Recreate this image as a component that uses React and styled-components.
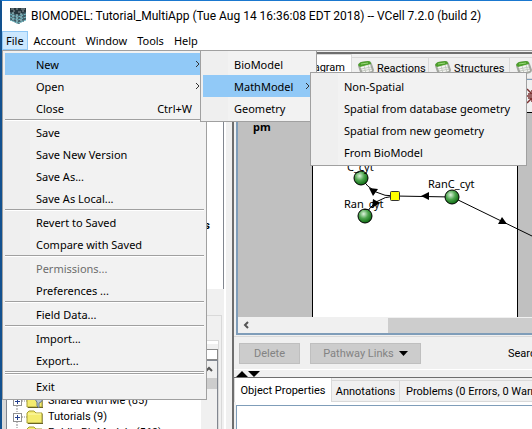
import React from "react";
import styled, { createGlobalStyle } from "styled-components";

const GlobalStyle = createGlobalStyle`
  * { box-sizing: border-box; }
  html, body { margin: 0; overflow: hidden; }
  body, button, input {
    font-family: "Noto Sans", "Open Sans", sans-serif;
    font-size: 11px;
    color: #000;
  }
  svg { flex: none; }
`;

const panel = "#f0f0f0";
const line = "#d9d9d9";
const uiFont = `"Roboto", "Noto Sans", sans-serif`;

const Window = styled.div`
  height: 100vh;
  display: flex;
  flex-direction: column;
  overflow: hidden;
  background: #fff;
  border-top: 1px solid #1a78cf;
  border-left: 2px solid #12518f;
`;

const TitleBar = styled.header`
  flex: none;
  display: flex;
  align-items: center;
  gap: 5px;
  height: 30px;
  padding-left: 8px;
  font-family: ${uiFont};
  font-size: 12px;
  white-space: nowrap;
`;

const MenuBar = styled.nav`
  flex: none;
  display: flex;
  gap: 2px;
  height: 19px;
  background: #fff;
`;

const MenuSlot = styled.div`
  position: relative;
`;

const MenuTitle = styled.button`
  display: block;
  height: 19px;
  padding: 0 3px;
  line-height: 17px;
  border: 1px solid ${(p) => (p.$open ? "#90c8f6" : "transparent")};
  background: ${(p) => (p.$open ? "#cce8ff" : "transparent")};
`;

const Popup = styled.div`
  position: absolute;
  z-index: 2;
  left: ${(p) => p.$left};
  top: ${(p) => p.$top};
  width: ${(p) => p.$width};
  padding: 2px;
  background: linear-gradient(90deg, #efefef 27px, #f2f2f2 27px);
  border: 1px solid #a0a0a0;
`;

const ItemSlot = styled.div`
  position: relative;
`;

const Item = styled.button`
  display: flex;
  justify-content: space-between;
  align-items: center;
  width: 100%;
  height: 22px;
  padding: 0 ${(p) => (p.$sub ? "3px" : "12px")} 0 31px;
  border: 0;
  white-space: nowrap;
  background: ${(p) => (p.$active ? "#91c9f7" : "transparent")};
  &:disabled { color: #6d6d6d; }
`;

const Separator = styled.hr`
  height: 2px;
  margin: 0;
  border: 0;
  border-top: 1px solid #a0a0a0;
  background: #fff;
`;

const Body = styled.main`
  flex: 1;
  min-height: 0;
  display: flex;
  background: ${panel};
  border-top: 1px solid #a0a0a0;
`;

const LeftPane = styled.section`
  flex: none;
  width: 224px;
  display: flex;
  flex-direction: column;
  border-right: 2px solid #fff;
`;

const NavTree = styled.div`
  flex: none;
  height: 238px;
  padding: 168px 13px 0 0;
  text-align: right;
  font: bold 11px ${uiFont};
  background: #fff;
  border-right: 1px solid #828790;
`;

const Database = styled.div`
  flex: 1;
  min-height: 0;
  display: flex;
  margin: 26px 2px 0 0;
  padding: 24px 2px 0 0;
  border: 1px solid ${line};
  border-width: 1px 1px 0 2px;
`;

const DatabaseTab = styled.div`
  flex: 1;
  min-width: 0;
  display: flex;
  flex-direction: column;
  border: 1px solid ${line};
  border-width: 1px 1px 0 2px;
  box-shadow: inset 0 3px #fff;
`;

const SearchField = styled.input`
  flex: none;
  width: 100%;
  height: 11px;
  margin-top: 8px;
  border: 1px solid #8a8a8a;
  background: #fff;
`;

const TreeBox = styled.div`
  flex: 1;
  min-height: 0;
  display: flex;
  border: 1px solid #828790;
  border-bottom: 0;
`;

const TreeList = styled.ul`
  flex: 1;
  min-width: 0;
  margin: 0;
  padding: 32px 0 0 6px;
  list-style: none;
  overflow: hidden;
  background: #fff;
`;

const TreeRow = styled.li`
  display: flex;
  align-items: center;
  gap: 5px;
  height: 16px;
  line-height: 16px;
  font-family: ${uiFont};
  white-space: nowrap;
`;

const VerticalBar = styled.div`
  width: 16px;
  display: flex;
  flex-direction: column;
  align-items: center;
  padding-top: 5px;
  background: ${panel};
`;

const VerticalThumb = styled.div`
  width: 16px;
  height: 11px;
  margin-top: 6px;
  background: #cdcdcd;
`;

const Divider = styled.div`
  flex: none;
  width: 6px;
`;

const RightPane = styled.section`
  flex: 1;
  min-width: 0;
  display: flex;
  flex-direction: column;
  border-left: 2px solid #6e6e6e;
`;

const TabStrip = styled.div`
  flex: none;
  display: flex;
  align-items: flex-end;
  height: ${(p) => p.$height};
  border-top: ${(p) => p.$rule} solid #6e6e6e;
  margin-top: ${(p) => p.$gap};
  overflow: hidden;
`;

const Tab = styled.button`
  flex: none;
  display: flex;
  align-items: center;
  justify-content: ${(p) => p.$align || "flex-start"};
  gap: 3px;
  width: ${(p) => p.$width};
  height: ${(p) => (p.$active ? "25px" : "22px")};
  padding: 0 ${(p) => (p.$align ? "6px" : "0")} 0 6px;
  border: 1px solid ${line};
  border-left-width: ${(p) => (p.$active ? "1px" : "0")};
  border-bottom-width: ${(p) => (p.$active ? "0" : "1px")};
  background: ${(p) => (p.$active ? "#fff" : panel)};
  font-family: ${uiFont};
  white-space: nowrap;
`;

const Editor = styled.div`
  flex: 1;
  min-height: 0;
  display: flex;
  flex-direction: column;
  margin-left: 2px;
  border: 2px solid #7f9db9;
  border-width: 1px 0 2px 2px;
`;

const ToolRow = styled.div`
  flex: none;
  display: flex;
  align-items: center;
  height: 33px;
  padding-left: 289px;
  border-bottom: 1px solid #000;
  overflow: hidden;
`;

const Canvas = styled.div`
  flex: 1;
  min-height: 0;
  overflow: hidden;
  background: #c0c0c0;
`;

const HorizontalBar = styled.div`
  flex: none;
  display: flex;
  align-items: center;
  height: 16px;
  padding-left: 5px;
  background: ${panel};
`;

const HorizontalThumb = styled.div`
  flex: 1;
  height: 15px;
  margin-left: 138px;
  background: #cdcdcd;
`;

const ActionRow = styled.div`
  flex: none;
  display: flex;
  align-items: center;
  gap: 10px;
  height: 34px;
  margin-top: 1px;
  padding-left: 5px;
  border-top: 1px solid ${line};
  border-bottom: 1px solid #fff;
  overflow: hidden;
`;

const ActionButton = styled.button`
  flex: none;
  display: flex;
  align-items: center;
  justify-content: center;
  gap: 5px;
  width: ${(p) => p.$width};
  height: 21px;
  padding: 0;
  border: 1px solid #bfbfbf;
  background: #ccc;
  font-family: ${uiFont};
  &:disabled { color: #838383; }
`;

const SearchLabel = styled.span`
  margin-left: 77px;
  font-family: ${uiFont};
`;

const SplitBar = styled.div`
  flex: none;
  display: flex;
  height: 7px;
  padding-left: 2px;
`;

const Properties = styled.div`
  flex: none;
  height: 27px;
  margin-left: 2px;
  background: #fff;
  border-top: 3px solid #fff;
  box-shadow: inset 1px 1px #7f9db9;
`;

function CellLogo() {
  return (
    <svg width="16" height="16" viewBox="0 0 16 16" aria-hidden="true">
      <path d="M0 2h16v10l-8 4-8-4z" fill="#54717a" />
      <path d="M0 0h16v4l-8 3-8-3z" fill="#26363d" />
      <path d="M1 1h3M6 1h2M11 1h4M3 3h2M8 4h3M12 3h2" stroke="#8f9ba0" />
      <path d="M3 4v10M7 6v10M11 5v10" stroke="#a9d8dc" strokeDasharray="2 1" />
      <path d="M1 5v8M5 6v9M9 6v10M13 4v10M15 4v9" stroke="#2e4a54" strokeDasharray="2 1" />
      <path d="M0 6l8 3 8-3M0 9l8 3 8-3M0 12l8 3 8-3" fill="none" stroke="#72c0ca" strokeDasharray="2 1" />
    </svg>
  );
}

function TableIcon() {
  return (
    <svg width="16" height="14" viewBox="0 0 16 14" aria-hidden="true">
      <path d="M0 5Q0 2 3 1L10 0Q13 0 14 3L16 9Q16 11 14 12L6 14Q3 14 2 11z" fill="#a2a69f" />
      <path d="M2 5L12 3L14 10L5 12z" fill="#f5f6f3" />
      <path d="M0 4Q1 2 3 1L10 0Q13 0 13 3L2 6z" fill="#4da02c" />
      <path d="M3 8l10-2M4 10l10-2M6 5l2 7M10 4l2 7" stroke="#c3c8c0" />
      <path d="M3 3l7-1" stroke="#9bd67c" />
    </svg>
  );
}

function Folder({ shared }) {
  return (
    <svg width="30" height="16" viewBox="0 0 30 16" aria-hidden="true">
      <path d="M4 0v4M4 13v3M9 8h5" stroke="#888" strokeDasharray="1 1" />
      <rect x="0.5" y="4.5" width="8" height="8" fill="#fff" stroke="#919191" />
      <path d="M2 8.500h5M4.500 6v5" stroke="#26418f" />
      <path d="M14 4l2-2h5l2 2h6v10H14z" fill="#f4ec70" stroke="#a79e32" />
      <path d="M15 5h13" stroke="#fffbb0" />
      <path d="M15 14.500h15V5" fill="none" stroke="#686325" />
      {shared && (
        <path d="M24 4a3 3 0 0 1 4 5l-2 1v5l-2-2v-4a3 3 0 0 1 0-5z" fill="#b8c7d8" stroke="#68788b" />
      )}
    </svg>
  );
}

function Chevron() {
  return (
    <svg width="6" height="8" viewBox="0 0 6 8" aria-hidden="true">
      <path d="M1 1l3 3-3 3" fill="none" stroke="#333" strokeWidth="1" />
    </svg>
  );
}

function Species({ x, y, name, labelX, labelY }) {
  return (
    <g>
      <circle cx={x} cy={y} r="7" fill="url(#species)" stroke="#000" />
      <text x={labelX} y={labelY}>{name}</text>
    </g>
  );
}

const GraphSvg = styled.svg`
  display: block;
  font: 11px "Noto Sans", sans-serif;
`;

function ReactionGraph() {
  return (
    <GraphSvg width="100%" height="205" role="img" aria-label="Reaction diagram">
      <defs>
        <radialGradient id="species" cx="0.4" cy="0.35" r="0.65">
          <stop offset="0" stopColor="#dff3df" />
          <stop offset="0.5" stopColor="#4fa650" />
          <stop offset="1" stopColor="#0c6a10" />
        </radialGradient>
      </defs>
      <rect x="74" y="-1" width="206" height="208" fill="#fff" />
      <path d="M74.500 0v205M279.500 0v205" stroke="#000" />
      <text x="15" y="18" fontWeight="bold">pm</text>
      <g fill="none" stroke="#000">
        <path d="M214 84L157 83M214 84L296 124M157 83Q136 84 123 65M157 83Q136 84 127 103" />
      </g>
      <path d="M183 83l8-4v8zM131 75l9 1-5 7zM135 86l7 4-8 5zM269 111l-9 0 4-7z" />
      <Species x={123} y={65} name="C_cyt" labelX={109} labelY={58} />
      <Species x={127} y={103} name="Ran_cyt" labelX={106} labelY={95} />
      <Species x={214} y={84} name="RanC_cyt" labelX={190} labelY={75} />
      <rect x="152.500" y="78.500" width="9" height="9" rx="1" fill="#ff0" stroke="#333" />
    </GraphSvg>
  );
}

const fileItems = [
  "Save", "Save New Version", "Save As...", "Save As Local...", "-",
  "Revert to Saved", "Compare with Saved", "-",
  "Permissions...", "Preferences ...", "-", "Field Data...", "-",
  "Import...", "Export...", "-", "-", "Exit",
];
const mathItems = ["Non-Spatial", "Spatial from database geometry", "Spatial from new geometry", "From BioModel"];

function FileMenu() {
  return (
    <Popup $left="0" $top="19px" $width="205px" role="menu">
      <ItemSlot>
        <Item $active $sub>New<Chevron /></Item>
        <Popup $left="195px" $top="-3px" $width="117px" role="menu">
          <Item>BioModel</Item>
          <ItemSlot>
            <Item $active $sub>MathModel<Chevron /></Item>
            <Popup $left="107px" $top="-3px" $width="217px" role="menu">
              {mathItems.map((name) => <Item key={name}>{name}</Item>)}
            </Popup>
          </ItemSlot>
          <Item>Geometry</Item>
        </Popup>
      </ItemSlot>
      <Item $sub>Open<Chevron /></Item>
      <Item>Close<span>Ctrl+W</span></Item>
      <Separator />
      {fileItems.map((name, i) =>
        name === "-" ? <Separator key={i} /> : <Item key={i} disabled={name === "Permissions..."}>{name}</Item>
      )}
    </Popup>
  );
}

export default function App() {
  return (
    <Window>
      <GlobalStyle />
      <TitleBar>
        <CellLogo />
        <span>BIOMODEL: Tutorial_MultiApp (Tue Aug 14 16:36:08 EDT 2018) -- VCell 7.2.0 (build 2)</span>
      </TitleBar>
      <MenuBar>
        <MenuSlot>
          <MenuTitle $open>File</MenuTitle>
          <FileMenu />
        </MenuSlot>
        {["Account", "Window", "Tools", "Help"].map((name) => <MenuTitle key={name}>{name}</MenuTitle>)}
      </MenuBar>
      <Body>
        <LeftPane>
          <NavTree>Applications</NavTree>
          <Database>
            <DatabaseTab>
              <SearchField aria-label="Search" />
              <TreeBox>
                <TreeList>
                  <TreeRow><Folder shared />Shared With Me (85)</TreeRow>
                  <TreeRow><Folder />Tutorials (9)</TreeRow>
                  <TreeRow><Folder />Public BioModels (569)</TreeRow>
                </TreeList>
                <VerticalBar>
                  <svg width="8" height="6" viewBox="0 0 8 6"><path d="M1 5l3-3 3 3" fill="none" stroke="#555" strokeWidth="2" /></svg>
                  <VerticalThumb />
                </VerticalBar>
              </TreeBox>
            </DatabaseTab>
          </Database>
        </LeftPane>
        <Divider />
        <RightPane>
          <TabStrip $height="27px" $rule="2px" $gap="1px">
            <Tab $active $width="118px" $align="flex-end">Diagram</Tab>
            <Tab $width="77px"><TableIcon />Reactions</Tab>
            <Tab $width="81px"><TableIcon />Structures</Tab>
            <Tab $width="77px"><TableIcon /></Tab>
          </TabStrip>
          <Editor>
            <ToolRow>
              <svg width="16" height="18" viewBox="0 0 16 18" fill="none" stroke="#7b3030" strokeWidth="1.500">
                <path d="M0 2l5 5M1 7h4V3M0 16l5-5M1 11h4v4M16 2l-5 5M15 7h-4M16 16l-5-5M15 11h-4M0 9h16" />
              </svg>
            </ToolRow>
            <Canvas><ReactionGraph /></Canvas>
            <HorizontalBar>
              <svg width="7" height="8" viewBox="0 0 7 8"><path d="M5 1L2 4l3 3" fill="none" stroke="#555" strokeWidth="2" /></svg>
              <HorizontalThumb />
            </HorizontalBar>
          </Editor>
          <ActionRow>
            <ActionButton $width="61px" disabled>Delete</ActionButton>
            <ActionButton $width="111px" disabled>
              Pathway Links
              <svg width="9" height="5" viewBox="0 0 9 5"><path d="M0 0h9L4.500 5z" /></svg>
            </ActionButton>
            <SearchLabel>Search</SearchLabel>
          </ActionRow>
          <SplitBar>
            <svg width="24" height="7" viewBox="0 0 24 7"><path d="M0 7l6-6 6 6zM12 1h12l-6 6z" /></svg>
          </SplitBar>
          <TabStrip $height="25px" $rule="1px" $gap="0">
            <Tab $active $width="98px" $align="center">Object Properties</Tab>
            <Tab $width="68px" $align="center">Annotations</Tab>
            <Tab $width="210px">Problems (0 Errors, 0 Warnings)</Tab>
          </TabStrip>
          <Properties />
        </RightPane>
      </Body>
    </Window>
  );
}
